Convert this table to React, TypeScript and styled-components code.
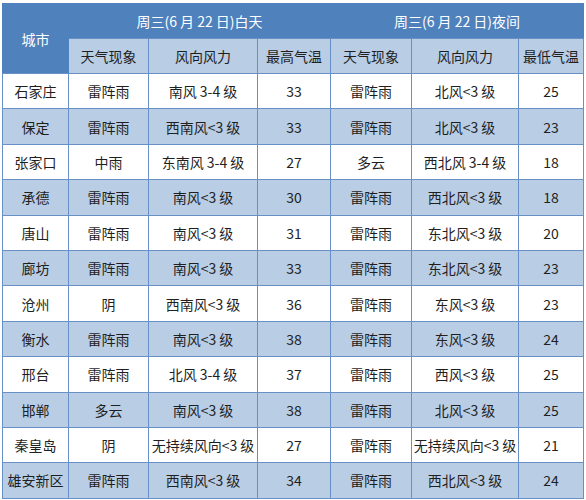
import React from 'react';
import styled, { createGlobalStyle } from 'styled-components';

/* ── page ──────────────────────────────────────────────── */
const Global = createGlobalStyle`
  body {
    margin: 0;
    background: #ffffff;
    font-family: 'Noto Sans CJK SC', 'Noto Sans', sans-serif;
  }
`;

const Wrap = styled.div`
  padding: 3px 3px 0 2px;
`;

const Table = styled.table`
  width: 581px;
  border-collapse: collapse;
  table-layout: fixed;
  font-size: 14px;
  color: #1f1f1f;
`;

/* ── header cells ──────────────────────────────────────── */
const Top = styled.th`
  height: 34px;
  padding: 0;
  background: #4f81bd;
  color: #ffffff;
  font-weight: 400;
  border: 1px solid #4f81bd;
  border-bottom-color: #6990c6;
`;

const Sub = styled.th`
  height: 34px;
  padding: 0;
  background: #b9cde5;
  color: #1f1f1f;
  font-weight: 400;
  border: 1px solid #6990c6;
`;

/* ── body ──────────────────────────────────────────────── */
const Row = styled.tr<{ $shade: boolean }>`
  background: ${p => (p.$shade ? '#b9cde5' : '#ffffff')};
`;

const Cell = styled.td`
  height: 34.4px;
  padding: 0;
  text-align: center;
  border: 1px solid #6990c6;
  white-space: nowrap;
`;

type Day = [string, string, string, number, string, string, number];

const rows: Day[] = [
  ['石家庄', '雷阵雨', '南风 3-4 级', 33, '雷阵雨', '北风<3 级', 25],
  ['保定', '雷阵雨', '西南风<3 级', 33, '雷阵雨', '北风<3 级', 23],
  ['张家口', '中雨', '东南风 3-4 级', 27, '多云', '西北风 3-4 级', 18],
  ['承德', '雷阵雨', '南风<3 级', 30, '雷阵雨', '西北风<3 级', 18],
  ['唐山', '雷阵雨', '南风<3 级', 31, '雷阵雨', '东北风<3 级', 20],
  ['廊坊', '雷阵雨', '南风<3 级', 33, '雷阵雨', '东北风<3 级', 23],
  ['沧州', '阴', '西南风<3 级', 36, '雷阵雨', '东风<3 级', 23],
  ['衡水', '雷阵雨', '南风<3 级', 38, '雷阵雨', '东风<3 级', 24],
  ['邢台', '雷阵雨', '北风 3-4 级', 37, '雷阵雨', '西风<3 级', 25],
  ['邯郸', '多云', '南风<3 级', 38, '雷阵雨', '北风<3 级', 25],
  ['秦皇岛', '阴', '无持续风向<3 级', 27, '雷阵雨', '无持续风向<3 级', 21],
  ['雄安新区', '雷阵雨', '西南风<3 级', 34, '雷阵雨', '西北风<3 级', 24],
];

const widths = [66, 80, 109, 73, 81, 107, 65];

const App: React.FC = () => (
  <Wrap>
    <Global />
    <Table>
      <colgroup>
        {widths.map((w, i) => (
          <col key={i} style={{ width: w }} />
        ))}
      </colgroup>
      <thead>
        <tr>
          <Top rowSpan={2}>城市</Top>
          <Top colSpan={3}>周三(6 月 22 日)白天</Top>
          <Top colSpan={3}>周三(6 月 22 日)夜间</Top>
        </tr>
        <tr>
          <Sub>天气现象</Sub>
          <Sub>风向风力</Sub>
          <Sub>最高气温</Sub>
          <Sub>天气现象</Sub>
          <Sub>风向风力</Sub>
          <Sub>最低气温</Sub>
        </tr>
      </thead>
      <tbody>
        {rows.map((r, i) => (
          <Row key={r[0]} $shade={i % 2 === 1}>
            {r.map((v, j) => (
              <Cell key={j}>{v}</Cell>
            ))}
          </Row>
        ))}
      </tbody>
    </Table>
  </Wrap>
);

export default App;
